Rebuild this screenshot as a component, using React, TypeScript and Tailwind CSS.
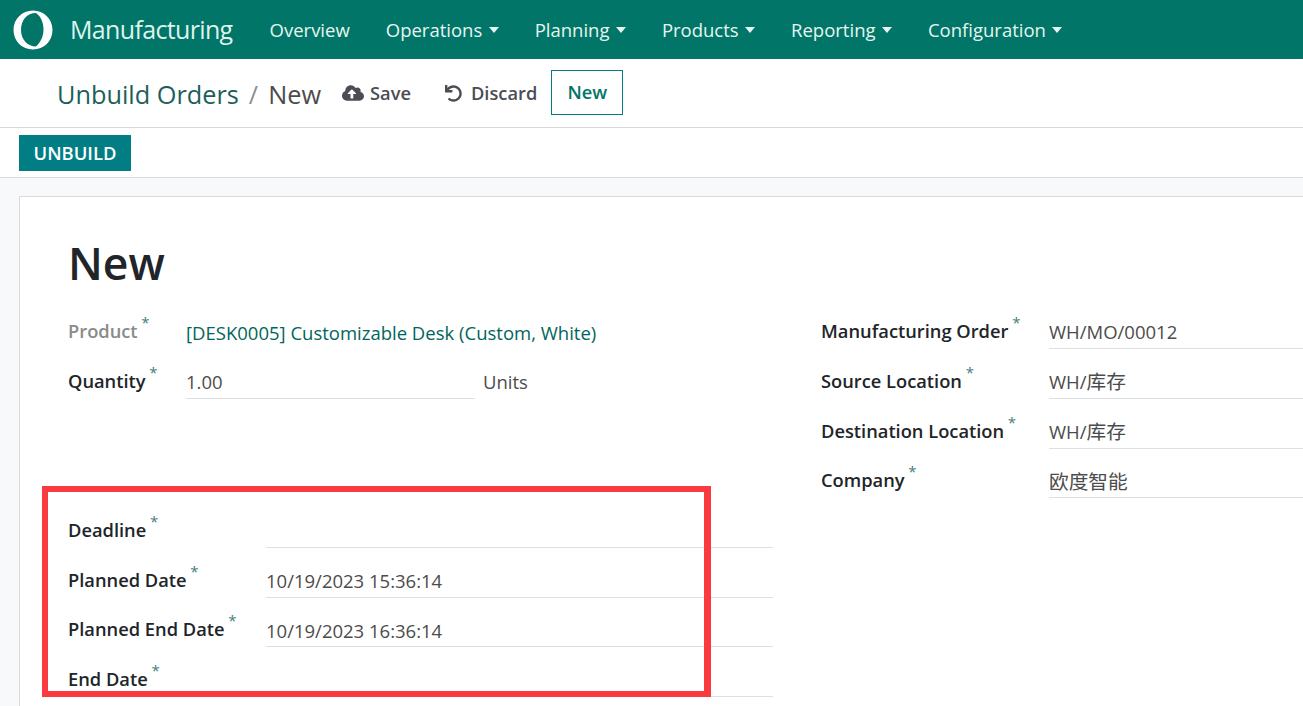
import type { ReactNode } from "react";
import { FaCloudUploadAlt, FaUndo } from "react-icons/fa";

const font = { fontFamily: '"Open Sans", "Noto Sans CJK SC", sans-serif' };

function Caret() {
  return <span className="ml-[6.4px] inline-block h-0 w-0 border-x-[5.5px] border-t-[6px] border-x-transparent border-t-[#e8f4f2]" />;
}

function NavItem({ label, caret = true }: { label: string; caret?: boolean }) {
  return (
    <div className="flex items-center text-[18.5px] text-[#e6f5f1]">
      {label}
      {caret && <Caret />}
    </div>
  );
}

function Label({ text, muted = false }: { text: string; muted?: boolean }) {
  return (
    <span className={`relative text-[18.3px] font-semibold ${muted ? "text-[#8a8a8a]" : "text-[#212529]"}`}>
      {text}
      <sup className="absolute -right-[12px] top-[-2px] text-[15px] font-normal leading-none text-[#45807b]">*</sup>
    </span>
  );
}

function Cjk({ children }: { children: ReactNode }) {
  return <span className="text-[19.7px]">{children}</span>;
}

function Row({ label, value, labelW, muted, link, underline = true, unit }: {
  label: string; value?: ReactNode; labelW: string; muted?: boolean; link?: boolean; underline?: boolean; unit?: string;
}) {
  return (
    <div className="flex h-[49.7px]">
      <div className={`${labelW} flex shrink-0 items-center pt-[13px]`}>
        <Label text={label} muted={muted} />
      </div>
      {unit ? (
        <div className="flex flex-1 items-stretch">
          <div className="flex w-[289px] items-center border-b border-[#dcdfe3] pt-[16px] text-[18.5px] text-[#4c4c4c]">{value}</div>
          <div className="ml-[8px] flex items-center pt-[15px] text-[18.5px] text-[#4c4c4c]">{unit}</div>
        </div>
      ) : (
        <div className={`flex flex-1 items-center pt-[17px] ${underline ? "border-b border-[#dcdfe3]" : ""}`}>
          <span className={`text-[18.5px] ${link ? "text-[#01655b]" : "text-[#4c4c4c]"}`}>{value}</span>
        </div>
      )}
    </div>
  );
}

export default function App() {
  return (
    <div style={font} className="relative h-[706px] w-[1303px] overflow-hidden bg-[#f8f9fb]">
      <nav className="flex h-[59px] items-center bg-[#017567] pl-[13px]">
        <svg width="40" height="40" viewBox="0 0 40 40" className="shrink-0">
          <path
            fillRule="evenodd"
            fill="#ffffff"
            d="M20 0.5C31 0.5 39.5 9 39.5 20S31 39.5 20 39.5 0.5 31 0.5 20 9 0.5 20 0.5ZM23 3C14 3 8 10 8 20 8 30 15 36.5 23 36.5 28 32 30.5 26 30.5 19.5 30.5 12.5 28 6.5 23 3Z"
          />
        </svg>
        <span className="ml-[17px] text-[25px] tracking-[-0.65px] text-[#dff3ee]">Manufacturing</span>
        <div className="ml-[37px] flex items-center gap-[36px]">
          <NavItem label="Overview" caret={false} />
          <NavItem label="Operations" />
          <NavItem label="Planning" />
          <NavItem label="Products" />
          <NavItem label="Reporting" />
          <NavItem label="Configuration" />
        </div>
      </nav>

      <div className="flex h-[69px] items-center border-b border-[#d8d8d8] bg-white pl-[57px]">
        <span className="pt-[3px] text-[25.3px] text-[#1c5f5a]">Unbuild Orders</span>
        <span className="ml-[10px] pt-[3px] text-[25.3px] text-[#8a8f94]">/</span>
        <span className="ml-[10px] pt-[3px] text-[25.3px] text-[#4c4c4c]">New</span>
        <div className="ml-[21px] flex items-center text-[18.3px] font-semibold text-[#4c4c55]">
          <FaCloudUploadAlt className="text-[22px]" />
          <span className="ml-[6px]">Save</span>
        </div>
        <div className="ml-[34px] flex items-center text-[18.3px] font-semibold text-[#4c4c55]">
          <FaUndo className="text-[17px]" />
          <span className="ml-[9px]">Discard</span>
        </div>
        <button className="mb-[2px] ml-[14px] flex h-[45px] w-[72px] items-center justify-center border border-[#017e84] text-[18.3px] font-semibold text-[#017567]">
          New
        </button>
      </div>

      <div className="flex h-[50px] items-start border-b border-[#d8d8d8] bg-white pl-[19px] pt-[7px]">
        <button className="flex h-[36px] w-[112px] items-center justify-center bg-[#017e84] text-[18.4px] font-semibold text-white">
          UNBUILD
        </button>
      </div>

      <div className="ml-[19px] mt-[18px] h-[600px] w-[1330px] border border-[#d8dadd] bg-white pl-[48px]">
        <h1 className="pt-[32px] text-[44.5px] font-[550] leading-[68px] text-[#212529]">New</h1>
        <div className="mt-[2.5px] flex gap-[48px]">
          <div className="w-[705px]">
            <Row label="Product" value="[DESK0005] Customizable Desk (Custom, White)" labelW="w-[118px]" muted link underline={false} />
            <Row label="Quantity" value="1.00" labelW="w-[118px]" unit="Units" />
            <div className="h-[99.4px]" />
            <Row label="Deadline" labelW="w-[198px]" />
            <Row label="Planned Date" value="10/19/2023 15:36:14" labelW="w-[198px]" />
            <Row label="Planned End Date" value="10/19/2023 16:36:14" labelW="w-[198px]" />
            <Row label="End Date" labelW="w-[198px]" />
          </div>
          <div className="flex-1">
            <Row label="Manufacturing Order" value="WH/MO/00012" labelW="w-[228px]" />
            <Row label="Source Location" value={<>WH/<Cjk>库存</Cjk></>} labelW="w-[228px]" />
            <Row label="Destination Location" value={<>WH/<Cjk>库存</Cjk></>} labelW="w-[228px]" />
            <Row label="Company" value={<Cjk>欧度智能</Cjk>} labelW="w-[228px]" />
          </div>
        </div>
      </div>

      <div className="absolute left-[42px] top-[486px] h-[211px] w-[669px] border-[6px] border-r-[7px] border-[#f93a3f]" />
    </div>
  );
}
